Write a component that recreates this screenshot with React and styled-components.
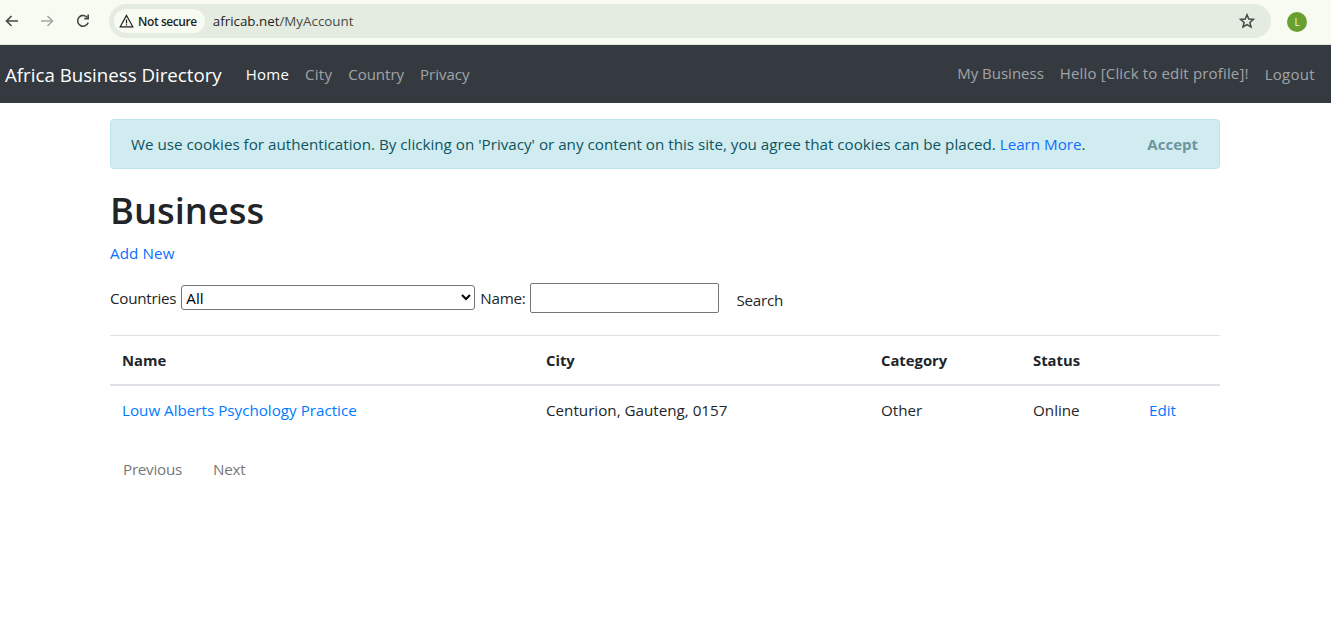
import React from "react";
import styled, { createGlobalStyle } from "styled-components";

const Global = createGlobalStyle`
body {
  margin: 0;
  background: #fff;
  font-family: "Open Sans", "Noto Sans", "Liberation Sans", sans-serif;
  font-size: 15.2px;
  color: #212529;
}
`;

const ChromeBar = styled.div`
  height: 44px;
  background: #f8fbf1;
  border-bottom: 1px solid #dfe3da;
  display: flex;
  align-items: center;
  padding: 0 0 0 4px;
`;
const NavIcon = styled.button`
  width: 16px;
  height: 16px;
  padding: 0;
  margin-right: ${(p) => p.$gap}px;
  margin-bottom: 2px;
  border: 0;
  background: none;
  display: flex;
  color: ${(p) => (p.$off ? "#a4a8a2" : "#444944")};
`;
const Omnibox = styled.div`
  width: 1162px;
  height: 34px;
  margin: 0 0 2px 18px;
  border-radius: 17px;
  background: #e4ebe0;
  display: flex;
  align-items: center;
  padding: 0 16px 0 5px;
  box-sizing: border-box;
`;
const Secure = styled.div`
  height: 24px;
  border-radius: 12px;
  background: #f8fbf1;
  display: flex;
  align-items: center;
  gap: 4px;
  padding: 0 8px 0 5px;
  font-size: 12px;
  font-weight: 600;
  letter-spacing: -0.42px;
  color: #1f1f1f;
`;
const Url = styled.div`
  margin-left: 8px;
  font-size: 13.35px;
  color: #474b46;
  flex: 1;
  b { font-weight: 400; color: #1f1f1f; }
`;
const Avatar = styled.div`
  width: 20px;
  height: 20px;
  margin: 0 0 0 16px;
  border-radius: 50%;
  background: #68a030;
  color: #f4f8ee;
  font-size: 10px;
  display: flex;
  align-items: center;
  justify-content: center;
`;

const NavBar = styled.nav`
  height: 58px;
  background: #343a40;
  display: flex;
  align-items: center;
  padding: 0 16px 0 5px;
`;
const Brand = styled.a`
  color: #fff;
  font-size: 18.7px;
  margin: 0 24px 0 0;
`;
const NavLink = styled.a`
  color: ${(p) => (p.$active ? "#fff" : "rgba(255,255,255,.55)")};
  font-size: 15px;
  margin-right: 16px;
  margin-bottom: ${(p) => (p.$raised ? 2 : 0)}px;
  letter-spacing: ${(p) => p.$track || 0}px;
  &:last-child { margin-right: 0; }
`;
const Spacer = styled.div`
  flex: 1;
`;

const Container = styled.main`
  width: 1110px;
  margin: 16px 0 0 110px;
`;
const Alert = styled.div`
  height: 50px;
  box-sizing: border-box;
  padding: 0 21px 0 20px;
  background: #d1ecf1;
  border: 1px solid #bee5eb;
  border-radius: 4px;
  color: #0c5460;
  display: flex;
  align-items: center;
  justify-content: space-between;
`;
const Link = styled.a`
  color: ${(p) => p.$color || "#0d6efd"};
`;
const Accept = styled.span`
  font-weight: 700;
  font-size: 15px;
  color: #6c959c;
`;
const Title = styled.h1`
  margin: 13px 0 0;
  font-size: 36.3px;
  line-height: 56px;
  font-weight: 600;
  color: #212529;
`;
const AddNew = styled.div`
  margin-top: 3px;
  line-height: 24px;
  letter-spacing: 0.1px;
`;
const SearchForm = styled.form`
  margin-top: 18px;
  height: 30px;
  display: flex;
  align-items: center;
  color: #212529;
  letter-spacing: -0.25px;
`;
const Select = styled.select`
  width: 294px;
  height: 25px;
  margin: 0 5px 1px 5px;
  font: inherit;
  background: #fff;
  border: 1px solid #767676;
  border-radius: 3px;
  color: #000;
`;
const Input = styled.input`
  width: 189px;
  height: 30px;
  box-sizing: border-box;
  margin-left: 4px;
  border: 1px solid #767676;
  border-radius: 2px;
`;
const SearchButton = styled.button`
  margin: 3px 0 0 18px;
  padding: 0;
  border: 0;
  background: none;
  font: inherit;
  letter-spacing: -0.25px;
  color: #212529;
`;
const Table = styled.table`
  width: 100%;
  margin-top: 22px;
  border-collapse: collapse;
  table-layout: fixed;
  th, td {
    padding: 0 12px;
    text-align: left;
  }
  th {
    height: 48px;
    font-size: 14.8px;
    font-weight: 700;
    border-top: 1px solid #dee2e6;
    border-bottom: 2px solid #dee2e6;
    color: #212529;
  }
  td { height: 48px; }
`;
const Pager = styled.div`
  display: flex;
  gap: 31px;
  padding: 25px 0 0 13px;
  color: #777;
  letter-spacing: -0.25px;
`;

const Back = () => (
  <svg width="16" height="16" viewBox="0 0 16 16" fill="none" stroke="currentColor" strokeWidth="1.6">
    <path d="M14 8H2.5M7.5 3 2.5 8l5 5" />
  </svg>
);
const Forward = () => (
  <svg width="16" height="16" viewBox="0 0 16 16" fill="none" stroke="currentColor" strokeWidth="1.6">
    <path d="M2 8h11.5M8.5 3l5 5-5 5" />
  </svg>
);
const Reload = () => (
  <svg width="16" height="16" viewBox="0 0 16 16" fill="none" stroke="currentColor" strokeWidth="1.6">
    <path d="M13.2 9.5A5.4 5.4 0 1 1 12.4 4.6" />
    <path d="M13.2 1.6v4h-4" />
  </svg>
);
const Warning = () => (
  <svg width="15" height="14" viewBox="0 0 15 14" fill="none" stroke="#1f1f1f" strokeWidth="1.2">
    <path d="M7.5 1.4 1.2 12.8h12.6z" />
    <path d="M7.5 5.4v4M7.5 10.2v1.2" />
  </svg>
);
const Star = () => (
  <svg width="16" height="16" viewBox="0 0 16 16" fill="none" stroke="#444944" strokeWidth="1.5">
    <path d="M8 1.8 9.8 6l4.6.4-3.5 3 1.1 4.5L8 11.5l-4 2.4 1.1-4.5-3.5-3L6.2 6z" />
  </svg>
);

const columns = [
  { label: "Name", width: 424 },
  { label: "City", width: 335 },
  { label: "Category", width: 152 },
  { label: "Status", width: 116 },
  { label: "", width: 83 },
];

export default function App() {
  return (
    <>
      <Global />
      <ChromeBar>
        <NavIcon $gap={19}><Back /></NavIcon>
        <NavIcon $gap={20} $off><Forward /></NavIcon>
        <NavIcon $gap={0}><Reload /></NavIcon>
        <Omnibox>
          <Secure><Warning />Not secure</Secure>
          <Url><b>africab.net</b>/MyAccount</Url>
          <Star />
        </Omnibox>
        <Avatar>L</Avatar>
      </ChromeBar>
      <NavBar>
        <Brand>Africa Business Directory</Brand>
        <NavLink $active $track={0.25}>Home</NavLink>
        <NavLink $track={0.25}>City</NavLink>
        <NavLink>Country</NavLink>
        <NavLink>Privacy</NavLink>
        <Spacer />
        <NavLink $raised>My Business</NavLink>
        <NavLink $raised $track={0.16}>Hello [Click to edit profile]!</NavLink>
        <NavLink $track={0.3}>Logout</NavLink>
      </NavBar>
      <Container>
        <Alert>
          <span>
            We use cookies for authentication. By clicking on 'Privacy' or any content on this site, you agree that cookies can be placed. <Link>Learn More</Link>.
          </span>
          <Accept>Accept</Accept>
        </Alert>
        <Title>Business</Title>
        <AddNew><Link>Add New</Link></AddNew>
        <SearchForm>
          Countries
          <Select defaultValue="All"><option>All</option></Select>
          Name:
          <Input />
          <SearchButton type="button">Search</SearchButton>
        </SearchForm>
        <Table>
          <colgroup>
            {columns.map((c) => <col key={c.label} width={c.width} />)}
          </colgroup>
          <thead>
            <tr>{columns.map((c) => <th key={c.label}>{c.label}</th>)}</tr>
          </thead>
          <tbody>
            <tr>
              <td><Link $color="#007bff">Louw Alberts Psychology Practice</Link></td>
              <td>Centurion, Gauteng, 0157</td>
              <td>Other</td>
              <td>Online</td>
              <td><Link $color="#007bff">Edit</Link></td>
            </tr>
          </tbody>
        </Table>
        <Pager><span>Previous</span><span>Next</span></Pager>
      </Container>
    </>
  );
}
